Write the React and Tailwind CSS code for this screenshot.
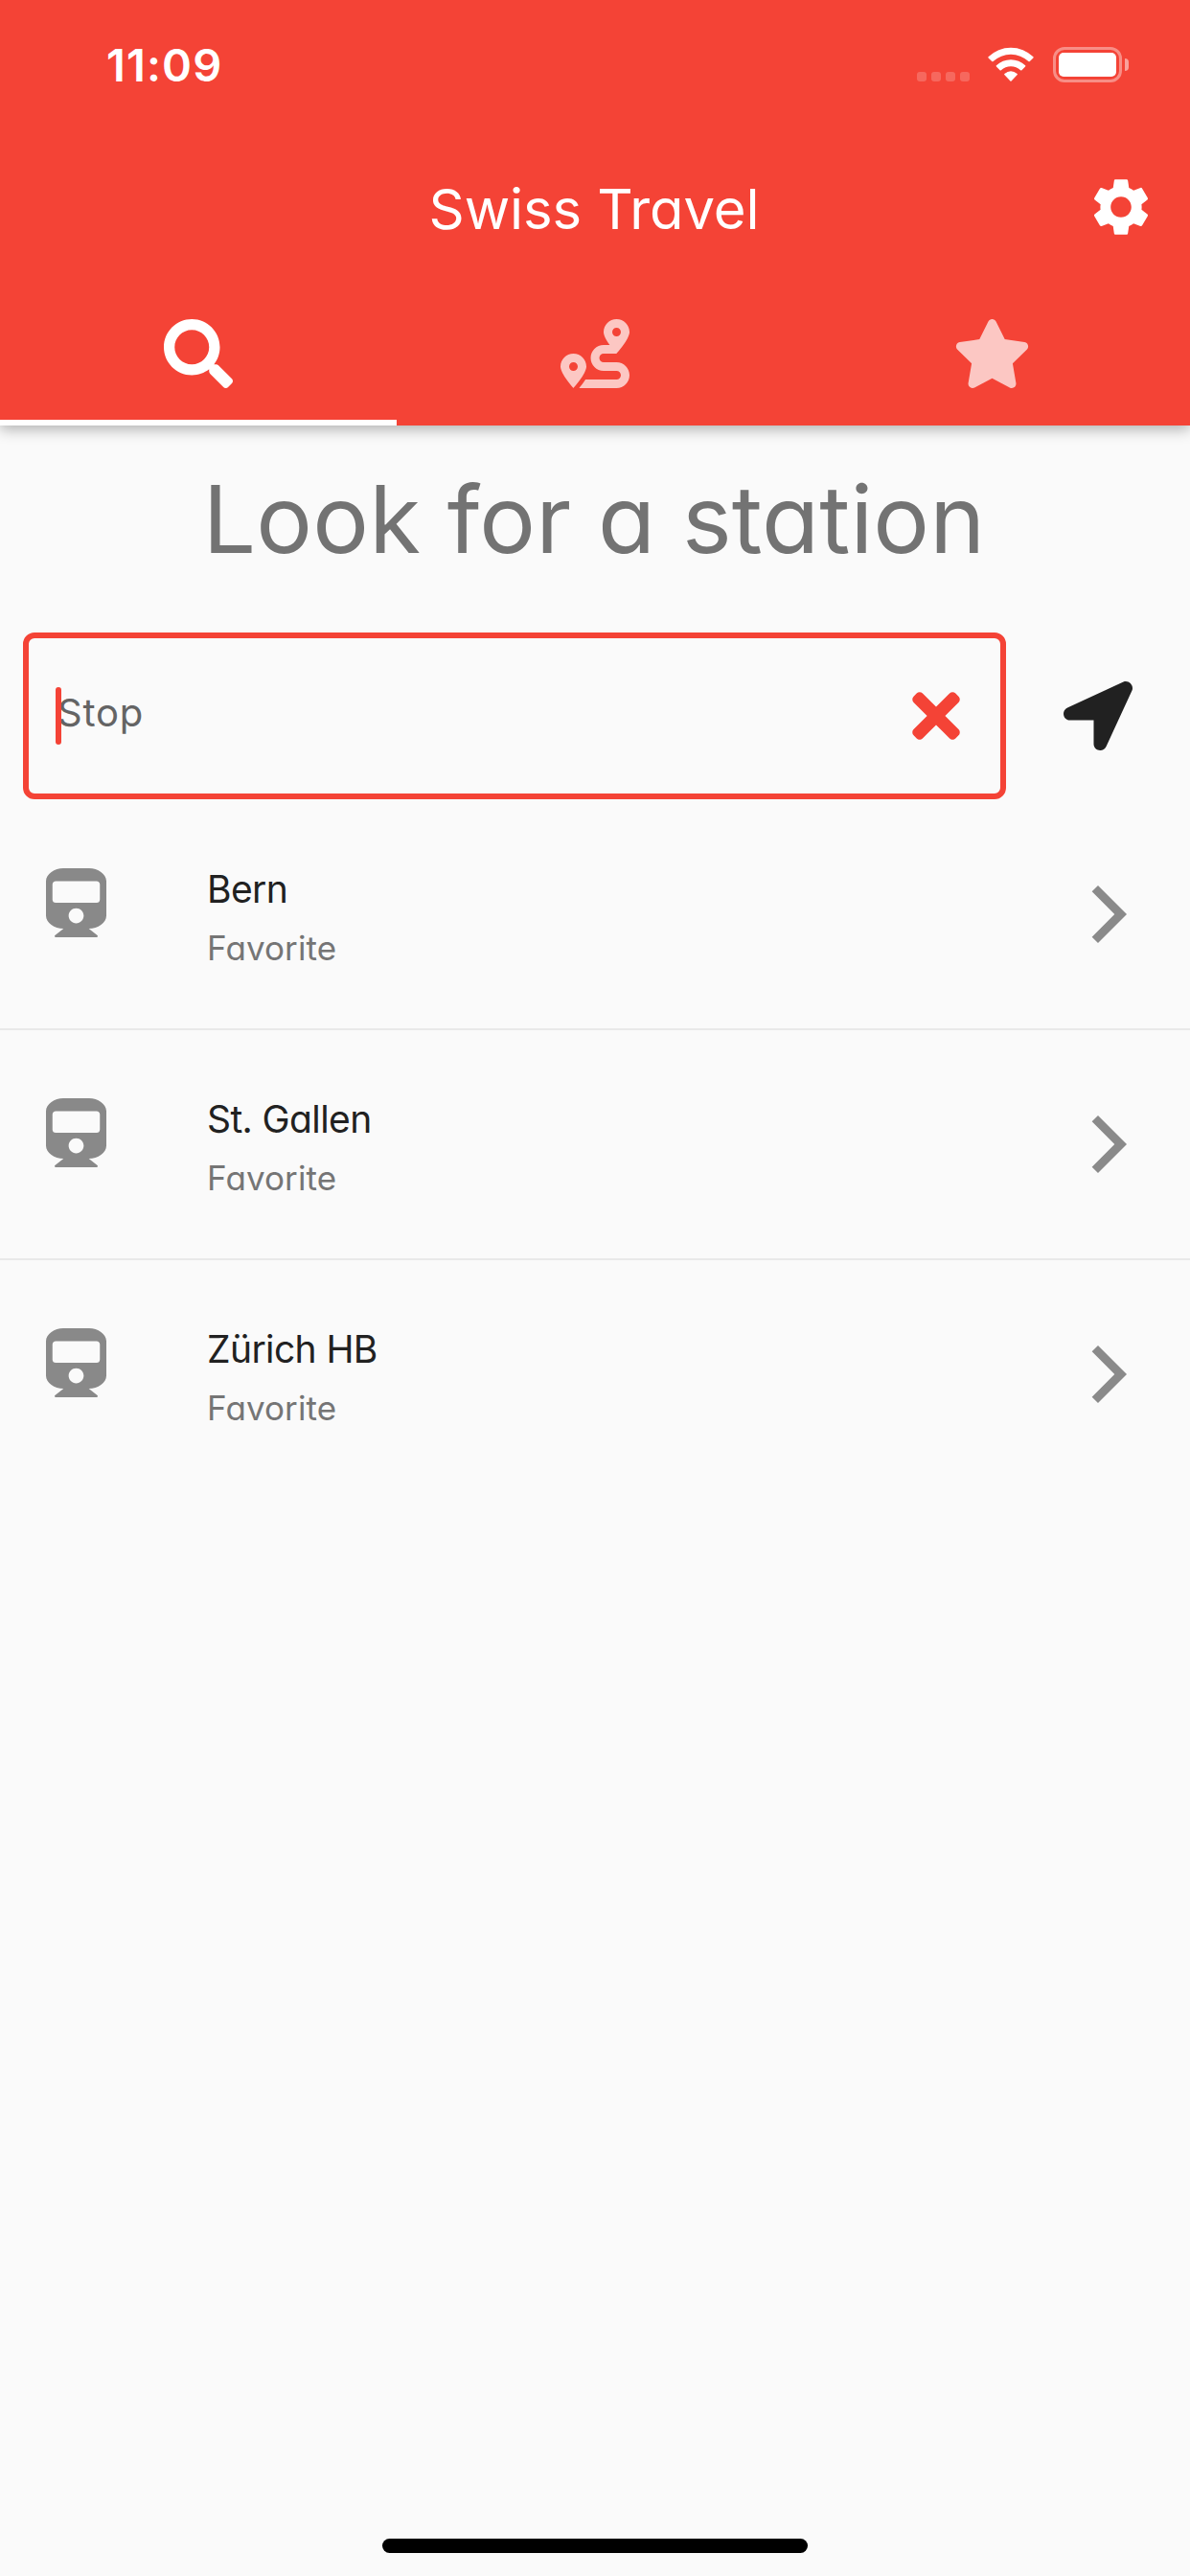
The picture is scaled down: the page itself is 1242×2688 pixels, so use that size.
import { FaLocationArrow, FaRoute, FaSearch, FaStar, FaTimes, FaTrain } from "react-icons/fa";
import { MdSettings } from "react-icons/md";

const stations = ["Bern", "St. Gallen", "Zürich HB"];

function StatusBar() {
  return (
    <div className="flex h-[132px] items-start justify-between pl-[111px] pr-[64px]">
      <span className="mt-[44px] text-[47px] font-semibold leading-none tracking-[1.1px] whitespace-nowrap">11:09</span>
      <div className="mt-[49px] flex h-[37px] items-start">
        <div className="mt-[26px] flex gap-[5px]">
          {[0, 1, 2, 3].map((dot) => (
            <span key={dot} className="size-[10px] rounded-[3px] bg-white/20" />
          ))}
        </div>
        <svg className="ml-[19px] h-[36px] w-[48px]" viewBox="0 0 48 36" fill="white">
          <path d="M0.6 10.2A33.5 33.5 0 0 1 47.4 10.2Q48 10.8 47.4 11.4L43.8 15Q43.1 15.6 42.4 15A27 27 0 0 0 5.6 15Q4.9 15.6 4.2 15L0.6 11.4Q0 10.8 0.6 10.2Z" />
          <path d="M8.9 19.2A22 22 0 0 1 39.1 19.2Q39.7 19.8 39.1 20.4L35.4 24.2Q34.8 24.8 34.1 24.2A15 15 0 0 0 13.9 24.2Q13.2 24.8 12.6 24.2L8.9 20.4Q8.3 19.8 8.9 19.2Z" />
          <path d="M17.3 28Q24 22.6 30.7 28Q31.2 28.5 30.7 29.1L24.6 35.5Q24 36 23.4 35.5L17.3 29.1Q16.8 28.5 17.3 28Z" />
        </svg>
        <div className="ml-[20px] flex h-[37px] w-[72px] rounded-[12px] border-[3px] border-white/40 p-[3px]">
          <div className="flex-1 rounded-[5px] bg-white" />
        </div>
        <span className="ml-[3px] mt-[12px] h-[13px] w-[4px] rounded-r-full bg-white/50" />
      </div>
    </div>
  );
}

function StationRow({ name, last }) {
  return (
    <li className={last ? "flex h-[240px] items-start pl-[48px] pr-[48px]" : "-mb-px flex h-[241px] items-start border-b-2 border-[#e9e9e9] pl-[48px] pr-[48px]"}>
      <FaTrain className="mt-[72px] h-[72px] w-[63px] text-[#898989]" />
      <div className="ml-[105px] mt-[74px] flex flex-1 flex-col">
        <span className="text-[39px] font-normal leading-none tracking-[-0.6px] text-[#212121]">{name}</span>
        <span className="mt-[25px] text-[35px] font-normal leading-none tracking-[0.1px] text-[#757575]">Favorite</span>
      </div>
      <svg className="mt-[84px] size-[72px]" viewBox="0 0 24 24" fill="#8a8a8a">
        <path d="M5.88 4.12 13.76 12l-7.88 7.88L8 22l10-10L8 2z" />
      </svg>
    </li>
  );
}

export default function App() {
  return (
    <div className="flex h-[2688px] w-[1242px] flex-col overflow-hidden bg-[#fafafa] font-['Inter',sans-serif] [font-feature-settings:'cv11']">
      <header className="z-10 h-[444px] shrink-0 bg-[#f44336] text-white shadow-[0_4px_14px_0_rgba(0,0,0,0.3)]">
        <StatusBar />
        <div className="grid h-[168px] grid-cols-[144px_1fr_144px] items-center">
          <h1 className="col-start-2 mt-[4px] mr-[2px] justify-self-center whitespace-nowrap text-[58px] font-normal leading-none tracking-[-0.1px]">Swiss Travel</h1>
          <MdSettings className="size-[72px] justify-self-center" />
        </div>
        <nav className="grid h-[144px] grid-cols-3">
          <div className="flex items-center justify-center border-b-[6px] border-white">
            <FaSearch className="size-[72px]" />
          </div>
          <div className="flex items-center justify-center pb-[6px] text-white/70">
            <FaRoute className="size-[72px]" />
          </div>
          <div className="flex items-center justify-center pb-[6px] text-white/70">
            <FaStar className="h-[72px] w-[81px]" />
          </div>
        </nav>
      </header>

      <main className="flex flex-1 flex-col">
        <h2 className="mt-[49px] mr-[2px] self-center whitespace-nowrap text-[98px] font-normal leading-none tracking-[0.15px] text-[#737373]">Look for a station</h2>
        <div className="mt-[69px] flex h-[174px] items-center pl-[24px] pr-[60px]">
          <div className="relative flex h-full w-[1026px] items-center justify-between rounded-[12px] border-[6px] border-[#f44336] pl-[30px] pr-[42px]">
            <span className="-mt-[6px] text-[40px] font-normal leading-none tracking-[0.8px] text-[#646464]">Stop</span>
            <span className="absolute left-[28px] top-[51px] h-[60px] w-[6px] rounded-full bg-[#f44336]" />
            <FaTimes className="h-[72px] w-[50px] text-[#f44336]" />
          </div>
          <FaLocationArrow className="ml-[60px] size-[72px] text-[#212121]" />
        </div>
        <ul>
          {stations.map((name, i) => (
            <StationRow key={name} name={name} last={i === stations.length - 1} />
          ))}
        </ul>
        <div className="mb-[24px] mt-auto h-[15px] w-[444px] self-center rounded-full bg-black" />
      </main>
    </div>
  );
}
